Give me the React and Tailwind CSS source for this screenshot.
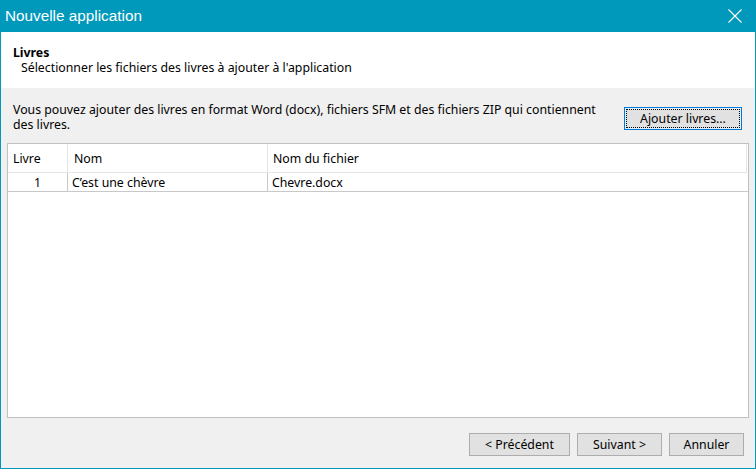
import React from "react";

const font = { fontFamily: '"Noto Sans", "Liberation Sans", Arial, sans-serif' };

const CloseIcon = () => (
  <svg width="14" height="14" viewBox="0 0 14 14" className="block">
    <path d="M0.5 0.5 L13.5 13.5 M13.5 0.5 L0.5 13.5" stroke="#ffffff" strokeWidth="1.1" fill="none" />
  </svg>
);

const WinButton = ({ children, className = "" }) => (
  <button
    className={`h-[23px] border border-[#adadad] bg-[#e1e1e1] text-[12.3px] text-black flex items-center justify-center ${className}`}
  >
    {children}
  </button>
);

const books = [{ num: 1, name: "C\u2019est une ch\u00e8vre", file: "Chevre.docx" }];

export default function App() {
  return (
    <div
      className="w-[756px] h-[469px] flex flex-col bg-[#f0f0f0] text-black text-[12.3px] leading-[15px]"
      style={font}
    >
      {/* title bar */}
      <div className="h-[32px] bg-[#0099bc] flex items-center justify-between pl-[5px] pr-[14px] shrink-0">
        <span
          className="text-white text-[15.3px] leading-[18px]"
          style={{ fontFamily: '"Liberation Sans", Arial, sans-serif' }}
        >
          Nouvelle application
        </span>
        <CloseIcon />
      </div>

      <div className="flex-1 flex flex-col border-x border-b border-[#0099bc]">
        {/* header */}
        <div className="h-[56px] bg-white pt-[13px] pl-[12px] shrink-0">
          <div className="font-bold">Livres</div>
          <div className="pl-[8px]">Sélectionner les fichiers des livres à ajouter à l'application</div>
        </div>

        {/* description + add button */}
        <div className="h-[55px] flex justify-between pl-[12px] pr-[13px] pt-[14px] shrink-0">
          <p className="w-[596px]">
            Vous pouvez ajouter des livres en format Word (docx), fichiers SFM et des fichiers ZIP qui contiennent des livres.
          </p>
          <button className="mt-[5px] w-[118px] h-[23px] border border-[#0078d7] bg-[#e5f1fb] p-[1px]">
            <span className="w-full h-full flex items-center justify-center border border-dotted border-black bg-[#e1e1e1]">
              Ajouter livres...
            </span>
          </button>
        </div>

        {/* table */}
        <div className="mx-[6px] h-[275px] border border-[#c0c0c0] bg-white flex flex-col shrink-0">
          <div className="h-[29px] flex border-b border-[#e5e5e5] mr-[1px]">
            <div className="w-[60px] border-r border-[#e5e5e5] flex items-center pl-[5px]">Livre</div>
            <div className="w-[200px] border-r border-[#e5e5e5] flex items-center pl-[6px]">Nom</div>
            <div className="flex-1 border-r border-[#e5e5e5] flex items-center pl-[5px]">Nom du fichier</div>
          </div>
          {books.map((b) => (
            <div key={b.num} className="h-[19px] flex border-b border-[#c8c8c8]">
              <div className="w-[60px] border-r border-[#c8c8c8] flex items-center justify-center">{b.num}</div>
              <div className="w-[200px] border-r border-[#c8c8c8] flex items-center pl-[4px]">{b.name}</div>
              <div className="flex-1 flex items-center pl-[4px]">{b.file}</div>
            </div>
          ))}
        </div>

        {/* footer buttons */}
        <div className="flex justify-end gap-[7px] pr-[11px] pt-[15px]">
          <WinButton className="w-[101px]">&lt; Précédent</WinButton>
          <WinButton className="w-[85px]">Suivant &gt;</WinButton>
          <WinButton className="w-[75px]">Annuler</WinButton>
        </div>
      </div>
    </div>
  );
}
